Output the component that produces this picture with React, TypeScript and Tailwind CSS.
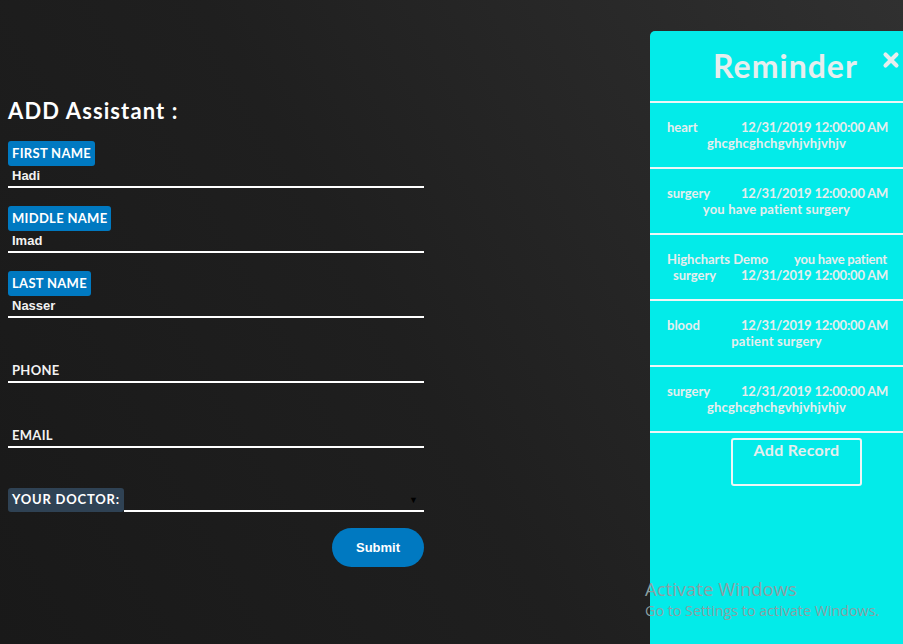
import { X } from "lucide-react";

const futura = "font-['Lato','DejaVu_Sans',sans-serif]";
const arial = "font-['Liberation_Sans',Arial,sans-serif]";

type Reminder = {
  line1: [string, string];
  line2: [string] | [string, string];
  wide?: boolean;
};

const reminders: Reminder[] = [
  { line1: ["heart", "12/31/2019 12:00:00 AM"], line2: ["ghcghcghchgvhjvhjvhjv"] },
  { line1: ["surgery", "12/31/2019 12:00:00 AM"], line2: ["you have patient surgery"] },
  {
    line1: ["Highcharts Demo", "you have patient"],
    line2: ["surgery", "12/31/2019 12:00:00 AM"],
    wide: true,
  },
  { line1: ["blood", "12/31/2019 12:00:00 AM"], line2: ["patient surgery"] },
  { line1: ["surgery", "12/31/2019 12:00:00 AM"], line2: ["ghcghcghchgvhjvhjvhjv"] },
];

function Field({ label, value, badge }: { label: string; value?: string; badge: boolean }) {
  return (
    <div className="mb-[17px]">
      <div className="h-[25px]">
        {badge && (
          <span
            className={`inline-flex h-[25px] items-center rounded-[3px] bg-[#0079c1] px-1 text-[13px] font-bold uppercase tracking-[0.3px] text-white ${futura}`}
          >
            {label}
          </span>
        )}
      </div>
      <div className="flex h-[23px] items-center border-b-2 border-white px-1">
        {badge ? (
          <span className={`text-[13px] font-bold text-[#f2f2f2] ${arial}`}>{value}</span>
        ) : (
          <span className={`text-[13px] font-bold uppercase tracking-[0.3px] text-[#f2f2f2] ${futura}`}>
            {label}
          </span>
        )}
      </div>
    </div>
  );
}

export default function App() {
  return (
    <div className="relative flex h-[644px] w-full overflow-hidden bg-[linear-gradient(60deg,#191919_0%,#1f1f1f_45%,#303030_100%)]">
      {/* Form */}
      <div className="ml-2 w-[416px] pt-[98px]">
        <h2
          className={`mb-[16px] h-[26px] text-[22px] font-bold leading-[26px] tracking-[1.1px] text-white ${futura}`}
        >
          ADD Assistant :
        </h2>
        <Field label="First Name" value="Hadi" badge />
        <Field label="Middle Name" value="Imad" badge />
        <Field label="Last Name" value="Nasser" badge />
        <Field label="Phone" badge={false} />
        <Field label="Email" badge={false} />

        <div className="flex h-[47px] items-end">
          <span
            className={`flex h-[24px] items-center rounded-[3px] bg-[#2f4254] px-1 text-[13px] font-bold uppercase tracking-[0.8px] text-white ${futura}`}
          >
            Your Doctor:
          </span>
          <div className="flex h-[22px] flex-1 items-center justify-end border-b-2 border-white pr-[6px]">
            <span className="text-[9px] text-black">▼</span>
          </div>
        </div>

        <div className="mt-[16px] flex justify-end">
          <button
            className={`h-[39px] w-[92px] rounded-full bg-[#0079c1] text-[13px] font-bold text-white ${arial}`}
          >
            Submit
          </button>
        </div>
      </div>

      <div className="flex-1" />

      {/* Reminder panel */}
      <div className={`mt-[31px] h-[613px] w-[253px] rounded-tl-[5px] bg-[#03ebe9] text-[#e6eeee] ${futura}`}>
        <div className="relative flex h-[70px] items-center justify-center">
          <span className="pl-[18px] text-[32px] font-bold tracking-[1px]">Reminder</span>
          <X className="absolute right-[1px] top-[18px] h-[22px] w-[22px]" strokeWidth={4.5} />
        </div>
        {reminders.map((r, i) => (
          <div
            key={i}
            className="border-t-2 border-[#eef6f6] pb-[16px] pt-[16px] text-[13px] font-bold leading-[16px]"
          >
            <div className="flex pl-[17px]">
              <span className={r.wide ? "w-[127px]" : "w-[74px]"}>{r.line1[0]}</span>
              <span className="tracking-[-0.2px]">{r.line1[1]}</span>
            </div>
            {r.line2.length === 1 ? (
              <div className="text-center tracking-[0.2px]">{r.line2[0]}</div>
            ) : (
              <div className="flex pl-[23px]">
                <span className="w-[68px]">{r.line2[0]}</span>
                <span className="tracking-[-0.2px]">{r.line2[1]}</span>
              </div>
            )}
          </div>
        ))}
        <div className="border-t-2 border-[#eef6f6] pt-[5px]">
          <button className="ml-[81px] flex h-[48px] w-[131px] justify-center rounded-[3px] border-2 border-[#eef6f6] pt-[1px] text-[16px] font-bold leading-[18px] tracking-[0.3px]">
            Add Record
          </button>
        </div>
      </div>

      {/* Windows watermark overlay */}
      <div className="pointer-events-none absolute left-[645px] top-[577px] font-['Open_Sans',sans-serif] text-[#8ba0a3]">
        <div className="text-[18.5px] leading-[23px]">Activate Windows</div>
        <div className="text-[14.3px] leading-[21px]">Go to Settings to activate Windows.</div>
      </div>
    </div>
  );
}
